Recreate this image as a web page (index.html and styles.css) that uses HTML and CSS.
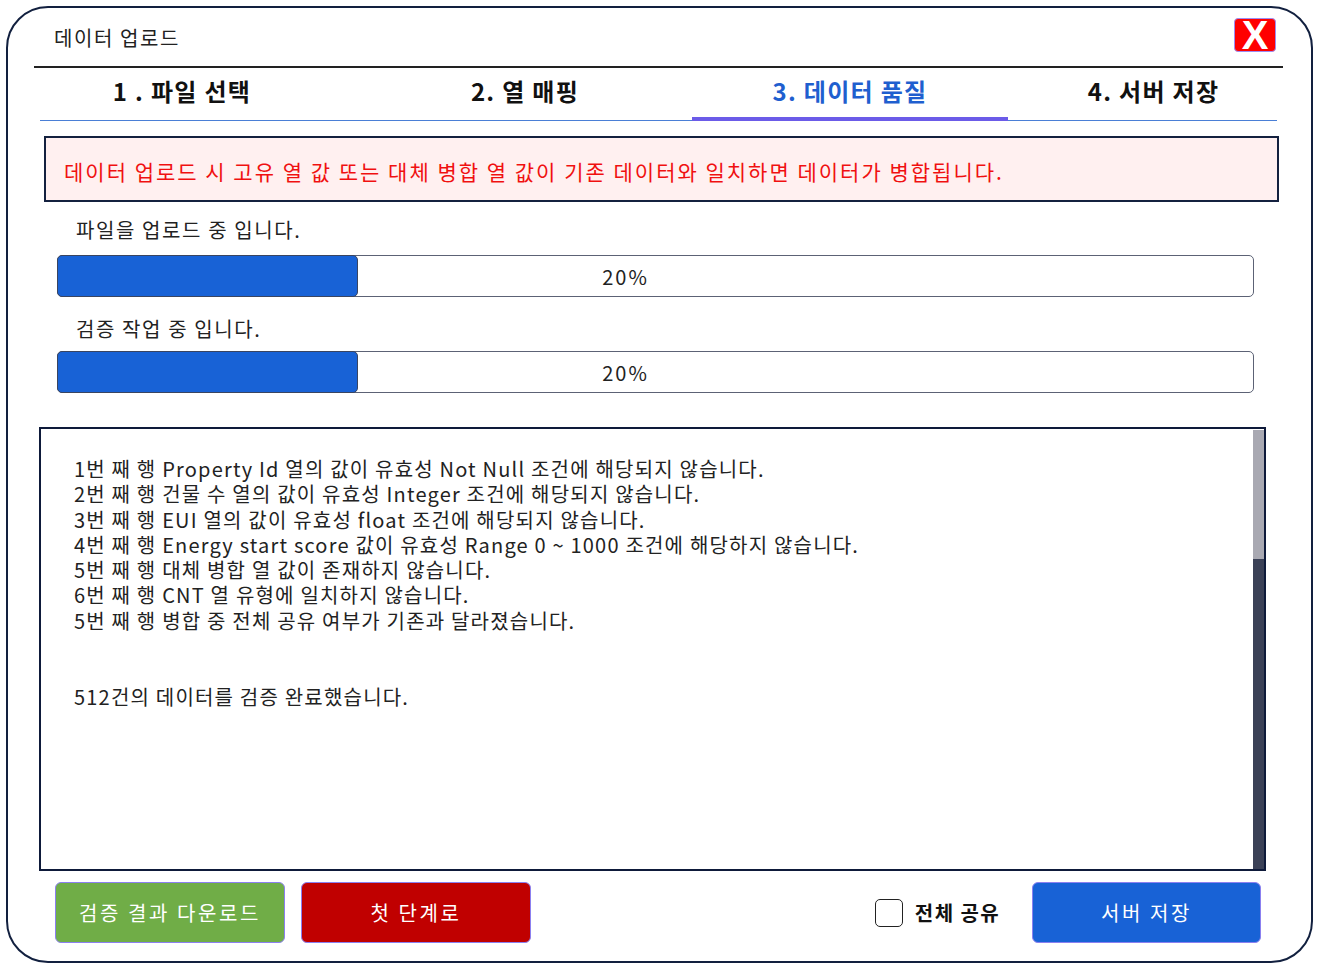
FILE: index.html
```html
<html>
<head>
  <meta charset="utf-8">
  <title>데이터 업로드</title>
  <link rel="stylesheet" href="styles.css">
</head>
<body>
<div class="dialog">
  <div class="header">
    <span class="title">데이터 업로드</span>
    <button class="close" type="button">X</button>
  </div>
  <div class="tabs">
    <div class="tab">1 . 파일 선택</div>
    <div class="tab tab-2">2. 열 매핑</div>
    <div class="tab active">3. 데이터 품질</div>
    <div class="tab tab-4">4. 서버 저장</div>
  </div>
  <div class="notice">데이터 업로드 시 고유 열 값 또는 대체 병합 열 값이 기존 데이터와 일치하면 데이터가 병합됩니다.</div>
  <div class="progress-group">
    <div class="progress-label">파일을 업로드 중 입니다.</div>
    <div class="progress">
      <div class="progress-fill" style="width: 25%"></div>
      <span class="progress-text">20%</span>
    </div>
    <div class="progress-label second">검증 작업 중 입니다.</div>
    <div class="progress">
      <div class="progress-fill" style="width: 25%"></div>
      <span class="progress-text">20%</span>
    </div>
  </div>
  <div class="log">
    <div class="log-text">
      <div>1번 째 행 Property Id 열의 값이 유효성 Not Null 조건에 해당되지 않습니다.</div>
      <div>2번 째 행 건물 수 열의 값이 유효성 Integer 조건에 해당되지 않습니다.</div>
      <div>3번 째 행 EUI 열의 값이 유효성 float 조건에 해당되지 않습니다.</div>
      <div>4번 째 행 Energy start score 값이 유효성 Range 0 ~ 1000 조건에 해당하지 않습니다.</div>
      <div>5번 째 행 대체 병합 열 값이 존재하지 않습니다.</div>
      <div>6번 째 행 CNT 열 유형에 일치하지 않습니다.</div>
      <div>5번 째 행 병합 중 전체 공유 여부가 기존과 달라졌습니다.</div>
      <div class="blank"></div>
      <div class="blank"></div>
      <div>512건의 데이터를 검증 완료했습니다.</div>
    </div>
    <div class="scrollbar"><div class="thumb"></div></div>
  </div>
  <div class="footer">
    <button class="btn btn-green" type="button">검증 결과 다운로드</button>
    <button class="btn btn-red" type="button">첫 단계로</button>
    <label class="share">
      <span class="checkbox"></span>
      <span>전체 공유</span>
    </label>
    <button class="btn btn-blue" type="button">서버 저장</button>
  </div>
</div>
</body>
</html>
```

FILE: styles.css
```css
body {
  margin: 0;
  background: white;
  font-family: "Noto Sans CJK KR", "Noto Sans", sans-serif;
  color: #222;
}
.dialog {
  box-sizing: border-box;
  margin: 6px;
  width: 1307px;
  height: 957px;
  border: 2px solid #12203f;
  border-radius: 42px;
  display: flex;
  flex-direction: column;
}
.header {
  height: 60px;
  margin: 0 28px 0 26px;
  padding: 0 7px 0 20px;
  border-bottom: 2px solid #222;
  display: flex;
  align-items: center;
  justify-content: space-between;
  box-sizing: border-box;
}
.header .title {
  font-size: 20px;
  letter-spacing: 1.6px;
  margin-top: 1px;
}
.close {
  width: 42px;
  height: 34px;
  margin-bottom: 5px;
  padding: 0;
  border: 1px solid #9d8cf2;
  border-radius: 4px;
  background: #ff0000;
  color: white;
  font-family: "Liberation Sans", sans-serif;
  font-weight: bold;
  font-size: 40px;
  line-height: 32px;
}
.tabs {
  display: grid;
  grid-template-columns: 284px 368px 316px 269px;
  margin: 0 34px 0 32px;
  height: 53px;
  border-bottom: 1px solid #4a7fd6;
  box-sizing: border-box;
}
.tab {
  text-align: center;
  font-size: 24px;
  letter-spacing: 1.3px;
  font-weight: bold;
  line-height: 46px;
  color: #111;
}
.tab-2 {
  padding-left: 34px;
}
.tab-4 {
  padding-left: 22px;
}
.tab.active {
  color: #1f5fcf;
  border-bottom: 4px solid #6b5be8;
  margin-bottom: -1px;
}
.notice {
  margin: 15px 32px 0 36px;
  height: 66px;
  box-sizing: border-box;
  border: 2px solid #14213f;
  background: #fff0f0;
  color: #f01010;
  font-size: 21px;
  letter-spacing: 2px;
  padding: 3px 0 0 18px;
  display: flex;
  align-items: center;
}
.progress-group {
  margin: 13px 57px 0 49px;
}
.progress-label {
  font-size: 20px;
  letter-spacing: 1.6px;
  line-height: 30px;
  padding-left: 19px;
  margin-bottom: 10px;
}
.progress-label.second {
  margin-top: 17px;
  margin-bottom: 7px;
}
.progress {
  position: relative;
  height: 42px;
  box-sizing: border-box;
  border: 1px solid #5c6275;
  border-radius: 5px;
  display: flex;
  align-items: center;
}
.progress-fill {
  position: absolute;
  left: -1px;
  top: -1px;
  bottom: -1px;
  background: #1862d6;
  border: 1px solid #3a4560;
  border-radius: 5px;
}
.progress-text {
  flex: 1;
  text-align: center;
  padding-right: 60px;
  font-size: 20px;
  letter-spacing: 2px;
}
.log {
  margin: 34px 45px 0 31px;
  height: 444px;
  box-sizing: border-box;
  border: 2px solid #0e1a3a;
  display: flex;
}
.log-text {
  flex: 1;
  padding: 27px 0 0 33px;
  font-size: 20px;
  letter-spacing: 1.2px;
  line-height: 25.3px;
}
.log-text .blank {
  height: 25.3px;
}
.scrollbar {
  width: 11px;
  margin: 1px 0 0;
  background: #3b4157;
}
.scrollbar .thumb {
  height: 129px;
  background: #a9a9b2;
}
.footer {
  display: flex;
  align-items: center;
  margin: 11px 50px 0 47px;
}
.btn {
  width: 230px;
  height: 61px;
  border: 1px solid #8b80f0;
  border-radius: 6px;
  color: white;
  font-family: "Noto Sans CJK KR", sans-serif;
  font-size: 20px;
  letter-spacing: 2.6px;
  padding: 0;
}
.btn-green {
  background: #70ad47;
}
.btn-red {
  background: #c00000;
  margin-left: 16px;
}
.btn-blue {
  background: #1862d6;
  margin-left: 32px;
  width: 229px;
}
.share {
  margin-left: auto;
  display: flex;
  align-items: center;
  gap: 12px;
  font-size: 20px;
  letter-spacing: 1.4px;
  font-weight: bold;
  color: #111;
}
.checkbox {
  width: 28px;
  height: 28px;
  box-sizing: border-box;
  border: 1.5px solid #222;
  border-radius: 5px;
  background: white;
}
```
